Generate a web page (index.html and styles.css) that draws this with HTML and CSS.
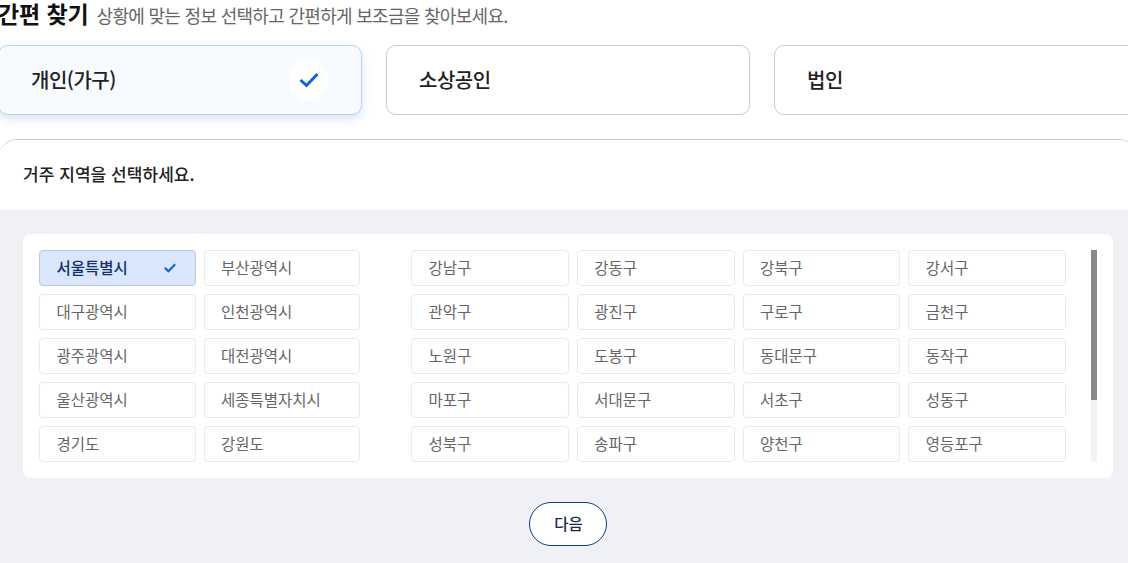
FILE: index.html
```html
<!DOCTYPE html>
<html lang="ko">
<head>
    <meta charset="UTF-8">
    <title>간편 찾기</title>
    <link rel="stylesheet" href="styles.css">
</head>
<body>
<div class="main">
    <div class="title-row">
        <h2>간편 찾기</h2>
        <span>상황에 맞는 정보 선택하고 간편하게 보조금을 찾아보세요.</span>
    </div>

    <div class="type-cards">
        <button class="type-card on">
            개인(가구)
            <span class="check-circle">
                <svg width="20" height="16" viewBox="0 0 20 16"><path d="M1.5 8 7.5 13.5 18.5 2" fill="none" stroke="#0a66d8" stroke-width="3"/></svg>
            </span>
        </button>
        <button class="type-card">소상공인</button>
        <button class="type-card">법인</button>
    </div>

    <div class="panel">
        <div class="panel-head">거주 지역을 선택하세요.</div>
        <div class="panel-body">
            <div class="area-box">
                <div class="sido">
                    <button class="area on">
                        서울특별시
                        <svg width="12" height="10" viewBox="0 0 12 10"><path d="M.8 4.8 4.4 8.3 11.2 1.3" fill="none" stroke="#0a66d8" stroke-width="2"/></svg>
                    </button>
                    <button class="area">부산광역시</button>
                    <button class="area">대구광역시</button>
                    <button class="area">인천광역시</button>
                    <button class="area">광주광역시</button>
                    <button class="area">대전광역시</button>
                    <button class="area">울산광역시</button>
                    <button class="area">세종특별자치시</button>
                    <button class="area">경기도</button>
                    <button class="area">강원도</button>
                </div>
                <div class="gugun">
                    <button class="area">강남구</button>
                    <button class="area">강동구</button>
                    <button class="area">강북구</button>
                    <button class="area">강서구</button>
                    <button class="area">관악구</button>
                    <button class="area">광진구</button>
                    <button class="area">구로구</button>
                    <button class="area">금천구</button>
                    <button class="area">노원구</button>
                    <button class="area">도봉구</button>
                    <button class="area">동대문구</button>
                    <button class="area">동작구</button>
                    <button class="area">마포구</button>
                    <button class="area">서대문구</button>
                    <button class="area">서초구</button>
                    <button class="area">성동구</button>
                    <button class="area">성북구</button>
                    <button class="area">송파구</button>
                    <button class="area">양천구</button>
                    <button class="area">영등포구</button>
                </div>
                <div class="scroll-track">
                    <div class="scroll-thumb"></div>
                </div>
            </div>
            <div class="btns">
                <button class="next">다음</button>
            </div>
        </div>
    </div>
</div>
</body>
</html>
```

FILE: styles.css
```css
html, body {
    height: 100%;
    overflow: hidden;
}
body {
    margin: 0;
    background: #fff;
    font-family: "Noto Sans CJK KR", "Noto Sans", sans-serif;
    color: #222;
}
button {
    font-family: inherit;
    cursor: pointer;
}
.main {
    width: 1140px;
    margin-left: -2px;
}
.title-row {
    display: flex;
    align-items: baseline;
    gap: 8px;
    height: 45px;
    line-height: 26px;
}
.title-row h2 {
    margin: 0;
    font-size: 23px;
    font-weight: 700;
    color: #111;
    letter-spacing: -0.1px;
}
.title-row span {
    font-size: 18px;
    color: #666;
    letter-spacing: -0.7px;
}
.type-cards {
    display: grid;
    grid-template-columns: repeat(3, 364px);
    gap: 24px;
}
.type-card {
    display: flex;
    align-items: center;
    justify-content: space-between;
    height: 70px;
    padding: 0 32px 2px 32px;
    background: #fff;
    border: 1px solid #c3cbd8;
    border-radius: 10px;
    font-size: 20px;
    font-weight: 500;
    letter-spacing: -0.5px;
    color: #222;
}
.type-card.on {
    background: #f7fbff;
    border-color: #b5d3f5;
    box-shadow: 0 4px 10px rgba(60, 100, 160, 0.18);
}
.check-circle {
    display: flex;
    align-items: center;
    justify-content: center;
    width: 40px;
    height: 40px;
    margin-bottom: -2px;
    border-radius: 50%;
    background: #fff;
}
.panel {
    margin-top: 24px;
    border-top: 1px solid #c3cbd8;
    border-radius: 20px 20px 0 0;
    overflow: hidden;
}
.panel-head {
    height: 70px;
    line-height: 67px;
    padding-left: 25px;
    background: #fff;
    font-size: 17px;
    font-weight: 500;
    letter-spacing: 0.05px;
}
.panel-body {
    padding: 24px 25px 20px;
    background: #eff1f5;
}
.area-box {
    display: flex;
    height: 212px;
    padding: 16px;
    background: #fff;
    border-radius: 8px;
}
.sido {
    display: grid;
    grid-template-columns: repeat(2, 1fr);
    grid-auto-rows: 36px;
    gap: 8px;
    flex: 0 0 321px;
    margin-right: 51px;
}
.gugun {
    display: grid;
    grid-template-columns: repeat(4, 1fr);
    grid-auto-rows: 36px;
    gap: 8px;
    flex: 0 0 655px;
    margin-right: 25px;
}
.scroll-track {
    width: 6px;
    height: 212px;
    background: #f3f3f4;
}
.scroll-thumb {
    height: 150px;
    background: #888;
}
.area {
    display: flex;
    align-items: center;
    justify-content: space-between;
    height: 36px;
    padding: 0 19px 2px 16.5px;
    background: #fff;
    border: 1px solid #e8e9ec;
    border-radius: 4px;
    font-size: 15.5px;
    letter-spacing: 0;
    color: #666;
}
.area.on {
    background: #d9e6fc;
    border-color: #b4c6e4;
    font-weight: 500;
    color: #16306a;
}
.area.on svg {
    margin-bottom: -2px;
}
.btns {
    display: flex;
    justify-content: center;
    margin-top: 24px;
}
.next {
    width: 78px;
    height: 44px;
    padding: 0 0 2px 1px;
    background: #fff;
    border: 1px solid #0d3a80;
    border-radius: 22px;
    font-size: 15.5px;
    font-weight: 500;
    color: #1a2a50;
}
```
